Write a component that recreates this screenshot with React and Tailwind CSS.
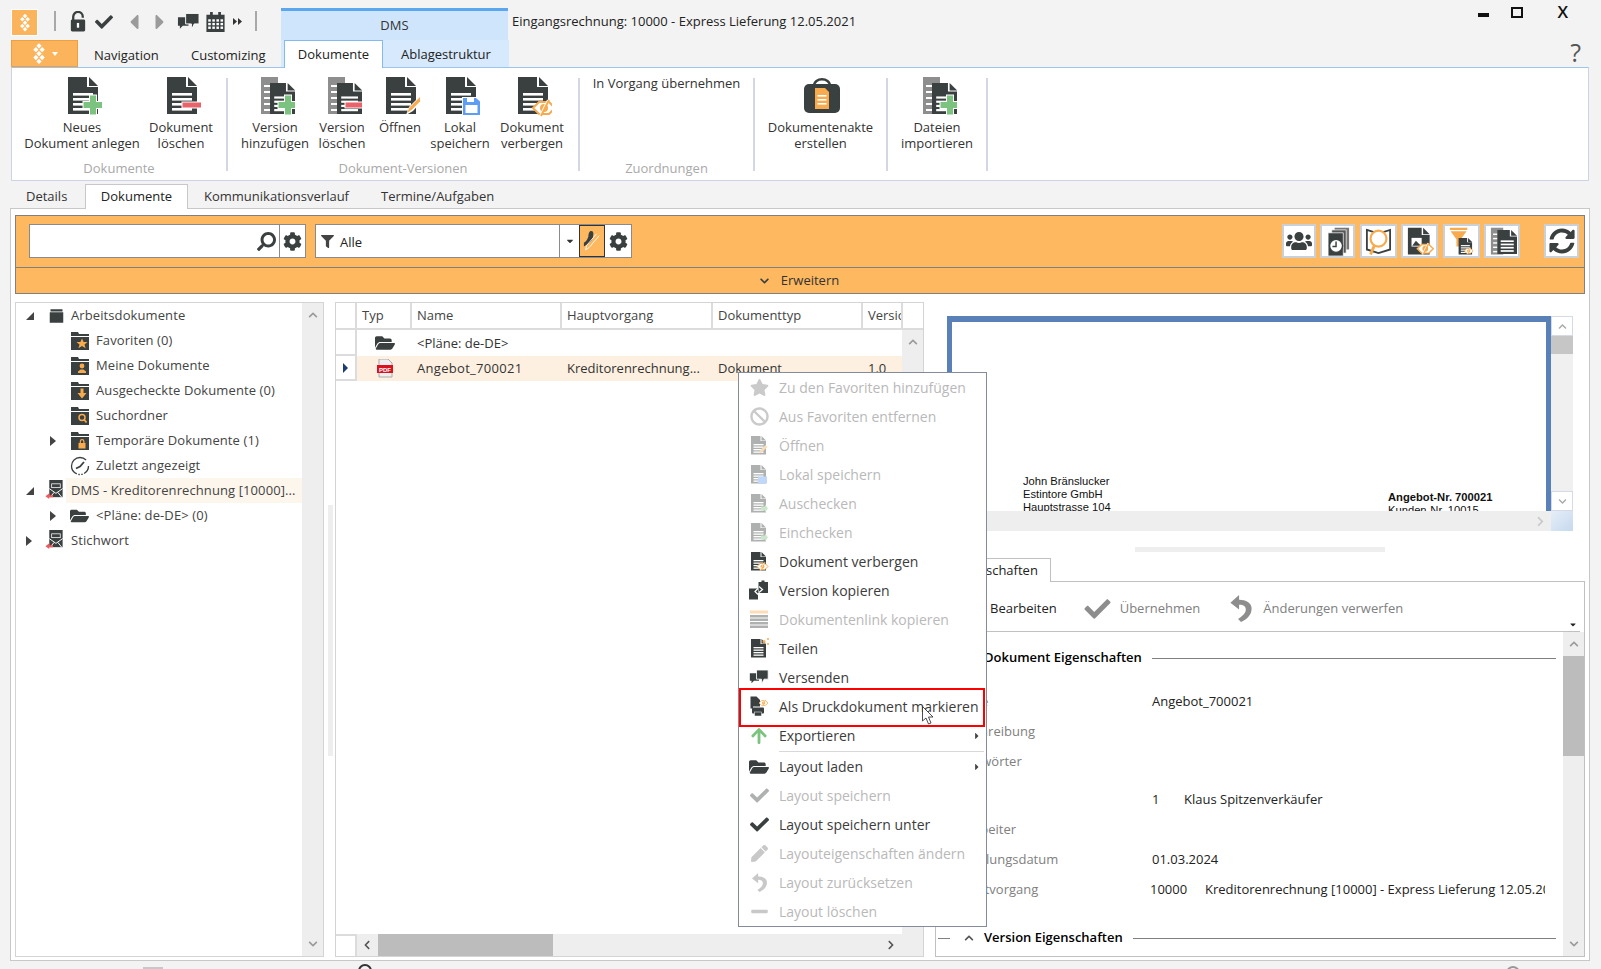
import { FaCheck, FaCog, FaSearch, FaFilter, FaStar, FaFolderOpen, FaUsers, FaSyncAlt, FaCaretLeft, FaCaretRight, FaCaretDown, FaPen, FaArrowUp, FaChevronDown, FaChevronUp, FaChevronLeft, FaChevronRight, FaBan, FaMinus } from "react-icons/fa";

const DARK = "#3a3f3f";

// basic document shape, 30x37 at the origin
function Page({ x = 0, y = 0, s = 1, fill = DARK, lines = true }) {
  return (
    <g transform={`translate(${x} ${y}) scale(${s})`}>
      <path d="M0 0H19V10H30V37H0Z" fill={fill} />
      <path d="M21 0L30 9H21Z" fill={fill} />
      {lines && [16, 21, 26, 31].map((l) => <rect key={l} x="5" y={l} width="20" height="2.6" fill="#fff" />)}
    </g>
  );
}

function Plus({ x = 25, y = 28 }) {
  return (
    <g transform={`translate(${x} ${y})`}>
      <path d="M-4-10.5H4V-4H10.5V4H4V10.5H-4V4H-10.5V-4H-4Z" fill="#fff" />
      <path d="M-3-9.5H3V-3H9.5V3H3V9.5H-3V3H-9.5V-3H-3Z" fill="#7cc37f" />
    </g>
  );
}

function Minus({ x = 25, y = 28 }) {
  return (
    <g transform={`translate(${x} ${y})`}>
      <rect x="-10.5" y="-3.5" width="21" height="7" fill="#fff" />
      <rect x="-9.5" y="-2.5" width="19" height="5" fill="#e8636a" />
    </g>
  );
}

function Eye({ x = 26, y = 29, s = 1 }) {
  return (
    <g transform={`translate(${x} ${y}) scale(${s})`} fill="none" stroke="#f7ab4e" strokeWidth="2">
      <path d="M-11 0L-5-6H5L11 0L5 6H-5Z" fill="#fff" />
      <circle cx="0" cy="0" r="3" fill="#f7ab4e" />
      <path d="M4-8L-4 8" stroke="#fff" strokeWidth="2" />
      <path d="M5-8L-3 8" />
    </g>
  );
}

function Back() {
  return (
    <g>
      <path d="M0 0H17V37H0Z" fill="#8e8e8e" />
      {[8, 14, 20, 26, 32].map((l) => <rect key={l} x="3" y={l} width="6" height="2" fill="#fff" />)}
    </g>
  );
}

function RibbonIcon({ type }) {
  return (
    <svg viewBox="-6 0 40 40" className="w-[40px] h-[40px] shrink-0">
      {type === "new" && <><Page /><Plus /></>}
      {type === "del" && <><Page /><Minus /></>}
      {type === "vadd" && <><Back /><Page x={9} y={6} s={0.84} /><Plus x={27} y={28} /></>}
      {type === "vdel" && <><Back /><Page x={9} y={6} s={0.84} /><Minus x={27} y={28} /></>}
      {type === "open" && (
        <>
          <Page />
          <path d="M20 38L23 30L35 18L38 22L27 34Z" fill="#fff" />
          <path d="M21 36L23.5 30.5L34.5 19.5L36.5 22L26 32.5Z" fill="#f7ab4e" />
        </>
      )}
      {type === "save" && (
        <>
          <Page />
          <path d="M16 20H31L35 24V39H16Z" fill="#fff" />
          <path d="M17 21H30L34 24.5V38H17Z" fill="#5e9df6" />
          <rect x="19.5" y="28" width="12" height="8" fill="#fff" />
          <rect x="21" y="21" width="7" height="4" fill="#fff" />
        </>
      )}
      {type === "hide" && <><Page /><Eye x={26} y={31} /></>}
      {type === "bag" && (
        <>
          <path d="M6 10C6 1 22 1 22 10" fill="none" stroke={DARK} strokeWidth="2.5" transform="translate(1 -1)" />
          <rect x="-3" y="7" width="36" height="29" rx="5" fill={DARK} />
          <path d="M8 11H18L22 15V32H8Z" fill="#f7ab4e" />
          {[18, 22, 26].map((l) => <rect key={l} x="10.5" y={l} width="9" height="1.6" fill="#fff" />)}
        </>
      )}
      {type === "import" && <><Back /><Page x={9} y={6} s={0.84} /><Plus x={27} y={28} /></>}
    </svg>
  );
}

function RibbonButton({ w, type, lines }) {
  return (
    <div className={`flex flex-col items-center ${w}`}>
      <RibbonIcon type={type} />
      <div className="mt-[2px] text-center leading-[16px] text-[#333] whitespace-nowrap">
        {lines.map((l) => <div key={l}>{l}</div>)}
      </div>
    </div>
  );
}

function Group({ w, label, children }) {
  return (
    <div className={`${w} h-full flex flex-col`}>
      <div className="flex h-[84px] items-start pt-[9px]">{children}</div>
      <div className="mt-[8px] text-center leading-[16px] text-[#a9a9a9]">{label}</div>
    </div>
  );
}

const Sep = () => <div className="w-[2px] h-[93px] mt-[10px] bg-[#d4d6e4] shrink-0" />;

function Diamonds({ className }) {
  const pts = [[9, 3], [5, 8], [13, 8], [9, 13], [5, 18], [13, 18], [9, 23]];
  return (
    <svg viewBox="0 0 18 27" className={className}>
      {pts.map(([x, y]) => <rect key={`${x}-${y}`} x={x - 2.4} y={y - 2.4} width="4.8" height="4.8" fill="#fff" transform={`rotate(45 ${x} ${y})`} />)}
    </svg>
  );
}

function Lock() {
  return (
    <svg viewBox="0 0 16 22" className="w-[16px] h-[21px]">
      <path d="M3 10V6a5 5 0 0 1 10 0V7" fill="none" stroke={DARK} strokeWidth="2.4" />
      <rect x="0.5" y="9" width="15" height="12.5" rx="1.5" fill={DARK} />
      <rect x="6.8" y="12.5" width="2.4" height="5" fill="#fff" />
    </svg>
  );
}

function Calendar() {
  return (
    <svg viewBox="0 0 20 22" className="w-[19px] h-[20px] -ml-[3px]">
      <path d="M0 3H20V22H0Z" fill={DARK} />
      <rect x="4" y="0" width="3" height="5" fill={DARK} />
      <rect x="13" y="0" width="3" height="5" fill={DARK} />
      {[8, 12, 16].map((y) => [2, 6.5, 11, 15.5].map((x) => <rect key={`${x}-${y}`} x={x} y={y} width="2.8" height="2.6" fill="#fff" />))}
    </svg>
  );
}

function Chat({ className }) {
  return (
    <svg viewBox="0 0 24 20" className={className}>
      <path d="M1 5H12V14H6L3 17V14H1Z" fill={DARK} />
      <path d="M9 1H23V12H18L15 18V12H9Z" fill={DARK} stroke="#fff" strokeWidth="1" />
    </svg>
  );
}

function UndoHook({ className, color }) {
  return (
    <svg viewBox="0 0 22 28" className={className}>
      <path d="M9 0L0 8L9 15V10C14 10 16 12 16 15C16 19 12 22 8 25L11 28C18 25 22 20 22 14C22 8 16 5 9 5Z" fill={color} />
    </svg>
  );
}

function FolderIcon({ badge }) {
  return (
    <svg viewBox="0 0 20 20" className="w-[20px] h-[20px] shrink-0">
      <path d="M1 1H8L9 3H19V5H1Z" fill={DARK} />
      <rect x="1" y="6" width="18" height="13" fill={DARK} />
      {badge === "star" && <path d="M12 7.5L13.6 11H17.5L14.5 13.4L15.6 17.3L12 15L8.400 17.300L9.500 13.400L6.500 11H10.400Z" fill="#f7ab4e" />}
      {badge === "user" && <><circle cx="12" cy="10" r="2.400" fill="#f7ab4e" /><path d="M8 17V15.500L10.500 13.500H13.500L16 15.500V17Z" fill="#f7ab4e" /></>}
      {badge === "down" && <path d="M10.500 7.500H13.500V12H16.500L12 17.500L7.500 12H10.500Z" fill="#f7ab4e" />}
      {badge === "search" && <><circle cx="12" cy="11.500" r="3" fill="none" stroke="#f7ab4e" strokeWidth="1.500" /><path d="M14 13.500L16.500 16.500" stroke="#f7ab4e" strokeWidth="1.800" /></>}
      {badge === "lock" && <><path d="M10.300 12V10.500a1.800 1.800 0 0 1 3.600 0V12" fill="none" stroke="#f7ab4e" strokeWidth="1.200" /><rect x="8.500" y="12" width="7" height="5.500" fill="#f7ab4e" /></>}
    </svg>
  );
}

function ClockIcon() {
  return (
    <svg viewBox="0 0 20 20" className="w-[20px] h-[20px] shrink-0">
      <circle cx="10" cy="10" r="8.500" fill="none" stroke={DARK} strokeWidth="1.300" strokeDasharray="9 1.500 1.500 1.500 1.500 1.500 30" />
      <path d="M14 6L10 10.500L6 12.500" fill="none" stroke={DARK} strokeWidth="1.800" />
    </svg>
  );
}

function DbIcon() {
  return (
    <svg viewBox="0 0 20 22" className="w-[20px] h-[21px] shrink-0 -ml-[3px]">
      <path d="M4 0H18V18H4Z" fill={DARK} />
      <rect x="6.500" y="4" width="9" height="4" fill="none" stroke="#fff" strokeWidth="0.800" />
      <path d="M4 9L11 14L18 9M5 18L9 13M17 18L13 13" fill="none" stroke="#fff" strokeWidth="1" />
      <path d="M0 17L4 14V16H8V18H4V20Z" fill="#f1585f" />
    </svg>
  );
}

const Tri = ({ open }) =>
  open ? (
    <svg viewBox="0 0 8 8" className="w-[8px] h-[8px]"><path d="M0 8H8V0Z" fill="#444" /></svg>
  ) : (
    <svg viewBox="0 0 6 10" className="w-[6px] h-[10px]"><path d="M0 0L6 5L0 10Z" fill="#444" /></svg>
  );

function TreeRow({ level, exp, icon, text, active }) {
  return (
    <div className="h-[25px] flex items-center text-[#444] tracking-[0.1px]">
      {level === 0 ? (
        <>
          <div className="w-[31px] pl-[10px] flex items-center">{exp && <Tri open={exp === "open"} />}</div>
          <div className="w-[19px] flex justify-center">{icon}</div>
          <div className={`h-[25px] flex-1 flex items-center pl-[5px] ${active ? "bg-[#fdf6ec]" : ""}`}>{text}</div>
        </>
      ) : (
        <>
          <div className="w-[54px] pl-[34px] flex items-center">{exp && <Tri open={false} />}</div>
          <div className="w-[26px]">{icon}</div>
          <div>{text}</div>
        </>
      )}
    </div>
  );
}

function ScrollBtn({ dir }) {
  return (
    <div className="h-[24px] flex items-center justify-center text-[#9a9a9a]">
      {dir === "up" && <FaChevronUp className="w-[10px] h-[10px]" />}
      {dir === "down" && <FaChevronDown className="w-[10px] h-[10px]" />}
    </div>
  );
}

function MenuIcon({ name }) {
  if (name === "star") return <FaStar className="w-[19px] h-[19px]" color="#7d7d7d" />;
  if (name === "ban") return <FaBan className="w-[19px] h-[19px]" color="#7d7d7d" />;
  if (name === "check") return <FaCheck className="w-[19px] h-[19px]" color={DARK} />;
  if (name === "pen") return <FaPen className="w-[17px] h-[17px]" color="#777" />;
  if (name === "undo") return <UndoHook className="w-[15px] h-[19px]" color="#777" />;
  if (name === "minus") return <FaMinus className="w-[19px] h-[19px]" color="#777" />;
  if (name === "send") return <Chat className="w-[20px] h-[17px]" />;
  if (name === "folder") return <FaFolderOpen className="w-[20px] h-[20px]" color={DARK} />;
  if (name === "up") return <FaArrowUp className="w-[18px] h-[18px]" color="#7cc37f" />;
  return (
    <svg viewBox="0 0 40 40" className="w-[20px] h-[21px]">
      {name === "table" && (
        <>
          <rect x="2" y="2" width="36" height="6" fill="#f7ab4e" />
          {[11, 18, 25, 32].map((y) => <rect key={y} x="2" y={y} width="36" height="5" fill={DARK} />)}
        </>
      )}
      {name === "copy" && (
        <>
          <path d="M0 16H18V38H0Z" fill={DARK} />
          <path d="M19 3H25V0H31V3H38V25H19Z" fill={DARK} />
          <path d="M20 12L27 18L20 24M18 28L12 22L18 16" stroke="#fff" strokeWidth="2.500" fill="none" />
        </>
      )}
      {name === "print" && (
        <>
          <path d="M3 0H15L22 7V24H3Z" fill={DARK} />
          <rect x="8" y="20" width="20" height="7" fill="#fff" />
          <rect x="6" y="22" width="24" height="12" rx="2" fill={DARK} />
          <rect x="11" y="31" width="14" height="8" fill={DARK} stroke="#fff" />
          <Eye x={29} y={13} s={0.8} />
        </>
      )}
      {name !== "table" && name !== "copy" && name !== "print" && <Page x={4} y={1} fill={DARK} />}
      {name === "open" && <path d="M20 36L23 29L33 19L37 23L26 33Z" fill="#f7ab4e" />}
      {name === "save" && <rect x="18" y="24" width="18" height="14" fill="#5e9df6" />}
      {name === "hide" && <Eye x={27} y={30} />}
      {name === "co" && <path d="M24 26H32V22L38 30L32 38V34H24Z" fill="#7cc37f" />}
      {name === "share" && <><circle cx="30" cy="6" r="3" fill="#f7ab4e" /><circle cx="38" cy="1" r="2" fill="#f7ab4e" /><circle cx="38" cy="11" r="2" fill="#f7ab4e" /></>}
    </svg>
  );
}

const MENU = [
  { t: "Zu den Favoriten hinzufügen", i: "star", d: true },
  { t: "Aus Favoriten entfernen", i: "ban", d: true },
  { t: "Öffnen", i: "open", d: true },
  { t: "Lokal speichern", i: "save", d: true },
  { t: "Auschecken", i: "co", d: true },
  { t: "Einchecken", i: "co", d: true },
  { t: "Dokument verbergen", i: "hide" },
  { t: "Version kopieren", i: "copy" },
  { t: "Dokumentenlink kopieren", i: "table", d: true },
  { t: "Teilen", i: "share" },
  { t: "Versenden", i: "send" },
  { t: "Als Druckdokument markieren", i: "print", mark: true },
  { t: "Exportieren", i: "up", arrow: true, sep: true },
  { t: "Layout laden", i: "folder", arrow: true },
  { t: "Layout speichern", i: "check", d: true },
  { t: "Layout speichern unter", i: "check" },
  { t: "Layouteigenschaften ändern", i: "pen", d: true },
  { t: "Layout zurücksetzen", i: "undo", d: true },
  { t: "Layout löschen", i: "minus", d: true },
];

function ContextMenu() {
  return (
    <div className="absolute left-[738px] top-[372px] w-[249px] h-[555px] bg-white border border-[#858c99] z-20 text-[14px]">
      {MENU.map((m) => (
        <div key={m.t}>
          <div className={`relative h-[29px] flex items-center ${m.d ? "text-[#b9b9b9]" : "text-[#3c3c3c]"}`}>
            <div className={`w-[40px] flex justify-center ${m.d ? "opacity-40" : ""}`}><MenuIcon name={m.i} /></div>
            <div className="whitespace-nowrap">{m.t}</div>
            {m.arrow && <FaCaretRight className="absolute right-[5px] w-[8px] h-[10px]" color="#444" />}
            {m.mark && (
              <>
                <div className="absolute left-0 right-[1px] top-[-4px] bottom-[-6px] border-2 border-[#ff0000]" />
                <svg viewBox="0 0 12 19" className="absolute left-[183px] top-[14px] w-[12px] h-[19px]">
                  <path d="M0.500 0.500V15L4 12L6.500 18L9 17L6.500 11H11Z" fill="#fff" stroke="#222" strokeWidth="0.800" />
                </svg>
              </>
            )}
          </div>
          {m.sep && <div className="h-[1px] my-[0.5px] ml-[40px] mr-[2px] bg-[#d8d8d8]" />}
        </div>
      ))}
    </div>
  );
}

function ToolBtn({ w, children }) {
  return <div className={`${w} h-[34px] bg-white border-2 border-[#c9d0d8] flex items-center justify-center`}>{children}</div>;
}

function ToolDoc({ children, viewBox = "-3 -1 38 40" }) {
  return <svg viewBox={viewBox} className="w-[29px] h-[29px]">{children}</svg>;
}

function GridHead({ w, children }) {
  return <div className={`${w} h-full flex items-center pl-[5px] pt-[1px] border-r-2 border-[#dcdcdc] overflow-hidden whitespace-nowrap text-[#444] shrink-0`}>{children}</div>;
}

const PROPS = [
  { label: "Name", value: <span>Angebot_700021</span>, h: "h-[30px]" },
  { label: "Beschreibung", h: "h-[30px]" },
  { label: "Stichwörter", h: "h-[29px]" },
  { label: "Autor", value: <span className="flex"><span className="w-[32px]">1</span>Klaus Spitzenverkäufer</span>, h: "h-[39px] pt-[9px]" },
  { label: "Bearbeiter", h: "h-[30px]" },
  { label: "Erstellungsdatum", value: <span>01.03.2024</span>, h: "h-[30px]" },
  { label: "Hauptvorgang", value: <span className="flex -ml-[2px] whitespace-nowrap"><span className="w-[55px]">10000</span>Kreditorenrechnung [10000] - Express Lieferung 12.05.2021</span>, h: "h-[30px]" },
];

function SectionHead({ text }) {
  return (
    <div className="flex items-center h-[30px]">
      <div className="w-[12px] h-[1px] ml-[2px] bg-[#808080]" />
      <FaChevronUp className="w-[10px] h-[10px] ml-[14px] mr-[10px]" color="#555" />
      <div className="font-semibold text-black whitespace-nowrap">{text}</div>
      <div className="flex-1 h-[1px] ml-[10px] mr-[7px] bg-[#808080]" />
    </div>
  );
}

export default function App() {
  return (
    <div className="relative w-[1601px] h-[969px] overflow-hidden bg-[#f3f3f3] font-['Open_Sans',sans-serif] text-[13px] text-[#222]">
      {/* title bar */}
      <div className="h-[40px] flex">
        <div className="ml-[11px] mt-[9px] w-[27px] h-[27px] bg-[#fbb45c] border border-white flex items-center justify-center">
          <Diamonds className="w-[12px] h-[18px]" />
        </div>
        <div className="w-[2px] h-[20px] mt-[11px] ml-[16px] bg-[#a8a8a8]" />
        <div className="flex items-center h-[25px] mt-[9px] ml-[14px] gap-[9px]">
          <Lock />
          <FaCheck className="w-[18px] h-[18px]" color={DARK} />
          <FaCaretLeft className="w-[14px] h-[24px] ml-[5px]" color="#9b9b9b" />
          <FaCaretRight className="w-[14px] h-[24px] ml-[3px]" color="#9b9b9b" />
          <Chat className="w-[23px] h-[20px] ml-[1px]" />
          <Calendar />
          <svg viewBox="0 0 9 7" className="w-[9px] h-[7px] -ml-[1px]"><path d="M0 0L4 3.500L0 7ZM5 0L9 3.500L5 7Z" fill="#333" /></svg>
        </div>
        <div className="w-[2px] h-[20px] mt-[11px] ml-[13px] bg-[#a8a8a8]" />
        <div className="w-[227px] h-[32px] mt-[8px] ml-[24px] bg-[#cfe5fc] border-t-[3px] border-[#5aa7ee] flex items-center justify-center text-[#333]">DMS</div>
        <div className="ml-[4px] mt-[12px] h-[18px] leading-[18px] text-[#222] whitespace-nowrap">Eingangsrechnung: 10000 - Express Lieferung 12.05.2021</div>
        <div className="ml-auto flex items-start pr-[33px]">
          <div className="w-[11px] h-[4px] mt-[13px] bg-[#111]" />
          <div className="w-[12px] h-[11px] mt-[7px] ml-[22px] border-2 border-[#111]" />
          <div className="text-[17px] font-semibold leading-none mt-[3px] ml-[34px] text-[#111]">X</div>
        </div>
      </div>

      {/* ribbon tabs */}
      <div className="h-[27px] flex items-stretch relative z-10">
        <div className="ml-[11px] w-[67px] h-[27px] bg-[#fbb45c] border border-[#ee9f3f] flex items-center justify-center gap-[6px]">
          <Diamonds className="w-[14px] h-[22px]" />
          <svg viewBox="0 0 6 4" className="w-[6px] h-[4px]"><path d="M0 0H6L3 4Z" fill="#fff" /></svg>
        </div>
        <div className="ml-[16px] w-[97px] leading-[28px] text-[#222] mt-[1px]">Navigation</div>
        <div className="w-[90px] leading-[28px] text-[#222] mt-[1px] whitespace-nowrap">Customizing</div>
        <div className="w-[228px] flex bg-[#d7e9fc] pl-[3px]">
          <div className="w-[99px] h-[28px] bg-white border border-b-0 border-[#83b9ee] flex items-center justify-center text-[#222]">Dokumente</div>
          <div className="pl-[18px] leading-[28px] text-[#222]">Ablagestruktur</div>
        </div>
        <div className="ml-auto mr-[20px] text-[25px] leading-[25px] text-[#555]">?</div>
      </div>

      {/* ribbon */}
      <div className="ml-[11px] w-[1578px] h-[114px] bg-white border border-[#cdd3e0] border-t-[#9cc4ee] flex">
        <Group w="w-[214px]" label="Dokumente">
          <RibbonButton w="w-[140px]" type="new" lines={["Neues", "Dokument anlegen"]} />
          <RibbonButton w="w-[58px]" type="del" lines={["Dokument", "löschen"]} />
        </Group>
        <Sep />
        <Group w="w-[350px]" label="Dokument-Versionen">
          <div className="w-[16px]" />
          <RibbonButton w="w-[62px]" type="vadd" lines={["Version", "hinzufügen"]} />
          <RibbonButton w="w-[72px]" type="vdel" lines={["Version", "löschen"]} />
          <RibbonButton w="w-[44px]" type="open" lines={["Öffnen"]} />
          <RibbonButton w="w-[76px]" type="save" lines={["Lokal", "speichern"]} />
          <RibbonButton w="w-[68px]" type="hide" lines={["Dokument", "verbergen"]} />
        </Group>
        <Sep />
        <Group w="w-[173px]" label="Zuordnungen">
          <div className="w-full -mt-[2px] text-center leading-[16px] text-[#333]">In Vorgang übernehmen</div>
        </Group>
        <Sep />
        <Group w="w-[131px]" label="">
          <RibbonButton w="w-[131px]" type="bag" lines={["Dokumentenakte", "erstellen"]} />
        </Group>
        <Sep />
        <Group w="w-[98px]" label="">
          <RibbonButton w="w-[98px]" type="import" lines={["Dateien", "importieren"]} />
        </Group>
        <Sep />
      </div>

      {/* page tabs */}
      <div className="h-[27px] flex items-stretch pl-[26px] relative z-10">
        <div className="leading-[30px] w-[59px] text-[#333]">Details</div>
        <div className="w-[103px] h-[25px] mt-[3px] bg-white border border-b-0 border-[#c8c8c8] flex items-center justify-center text-[#222]">Dokumente</div>
        <div className="leading-[30px] ml-[16px] w-[177px] text-[#333]">Kommunikationsverlauf</div>
        <div className="leading-[30px] text-[#333]">Termine/Aufgaben</div>
      </div>

      {/* content */}
      <div className="ml-[10px] w-[1580px] h-[753px] bg-white border border-[#c8c8c8] pl-[4px] pt-[6px]">
        {/* orange toolbar */}
        <div className="w-[1570px] h-[79px] bg-[#fdb860] border border-[#808080]">
          <div className="h-[52px] flex items-center border-b border-[#808080] pl-[13px] pb-[1px]">
            <div className="w-[277px] h-[34px] bg-white border border-[#8a8a8a] flex">
              <div className="flex-1 flex items-center justify-end pr-[3px]">
                <FaSearch className="w-[19px] h-[19px] -scale-x-100" color={DARK} />
              </div>
              <div className="w-[26px] border-l border-[#8a8a8a] flex items-center justify-center"><FaCog className="w-[19px] h-[19px]" color={DARK} /></div>
            </div>
            <div className="ml-[9px] w-[317px] h-[34px] bg-white border border-[#8a8a8a] flex">
              <div className="w-[243px] flex items-center pl-[5px] pt-[3px] text-[#222] gap-[6px]">
                <FaFilter className="w-[13px] h-[13px] -mt-[3px]" color="#444" />Alle
              </div>
              <div className="w-[20px] border-l border-[#8a8a8a] flex items-center justify-center"><FaCaretDown className="w-[10px] h-[10px]" color="#333" /></div>
              <div className="w-[26px] bg-[#fdb860] border border-[#333] flex items-center justify-center">
                <svg viewBox="0 0 20 24" className="w-[18px] h-[22px]">
                  <path d="M9 1C13 1 11 7 11 9C9 13 6 15 1 18V14C4 12 5 10 6 7C6 4 7 1 9 1Z" fill={DARK} />
                  <path d="M18 6L7 19L3 22L4 17L15 4" fill="none" stroke="#fff" strokeWidth="1" />
                </svg>
              </div>
              <div className="flex-1 flex items-center justify-center"><FaCog className="w-[19px] h-[19px]" color={DARK} /></div>
            </div>
            <div className="ml-auto flex gap-[4.500px] pr-[5px]">
              <ToolBtn w="w-[34px]"><FaUsers className="w-[26px] h-[24px]" color={DARK} /></ToolBtn>
              <ToolBtn w="w-[35px]">
                <ToolDoc><path d="M12 0H32V30H12Z" fill="#777" /><path d="M8 3H28V35H8Z" fill="#555" stroke="#fff" /><path d="M3 7H24V39H3Z" fill={DARK} stroke="#fff" /><circle cx="14" cy="25" r="9" fill="#fff" stroke={DARK} strokeWidth="2" /><path d="M14 19V26H9" stroke={DARK} strokeWidth="2" fill="none" /></ToolDoc>
              </ToolBtn>
              <ToolBtn w="w-[37px]">
                <ToolDoc><path d="M0 3L16 8L32 3V30L16 35L0 30Z" fill="none" stroke={DARK} strokeWidth="2.500" /><circle cx="16" cy="15" r="11" fill="#fff" stroke="#f7ab4e" strokeWidth="3" /><path d="M10 25L5 37" stroke="#f7ab4e" strokeWidth="4" /></ToolDoc>
              </ToolBtn>
              <ToolBtn w="w-[37px]">
                <ToolDoc><Page lines={false} /><rect x="5" y="14" width="14" height="12" fill="#fff" /><path d="M6 25L11 18L18 25Z" fill={DARK} /><Eye x={24} y={29} /></ToolDoc>
              </ToolBtn>
              <ToolBtn w="w-[37px]">
                <ToolDoc><path d="M0 0H24V3H0ZM1 5H23L15 16V26H9V16Z" fill="#f7ab4e" /><Page x={12} y={14} s={0.62} /><Eye x={26} y={32} s={0.55} /></ToolDoc>
              </ToolBtn>
              <ToolBtn w="w-[36px]">
                <ToolDoc><Back /><Page x={9} y={3} s={0.9} /></ToolDoc>
              </ToolBtn>
              <div className="w-[15px]" />
              <ToolBtn w="w-[35px]"><FaSyncAlt className="w-[26px] h-[26px]" color={DARK} /></ToolBtn>
            </div>
          </div>
          <div className="h-[25px] flex items-center justify-center gap-[9px] text-[#333] pr-[4px]">
            <FaChevronDown className="w-[15px] h-[10px]" color={DARK} />
            Erweitern
          </div>
        </div>

        {/* main area */}
        <div className="flex mt-[8px] h-[655px]">
          <div className="w-[309px] h-full border border-[#d4d4d4] flex overflow-hidden">
            <div className="flex-1">
              <TreeRow level={0} exp="open" icon={<svg viewBox="0 0 20 20" className="w-[15px] h-[16px]"><path d="M2 1H18V4H2Z" fill={DARK} /><rect x="1" y="5" width="18" height="14" fill={DARK} /></svg>} text="Arbeitsdokumente" />
              <TreeRow level={1} icon={<FolderIcon badge="star" />} text="Favoriten (0)" />
              <TreeRow level={1} icon={<FolderIcon badge="user" />} text="Meine Dokumente" />
              <TreeRow level={1} icon={<FolderIcon badge="down" />} text="Ausgecheckte Dokumente (0)" />
              <TreeRow level={1} icon={<FolderIcon badge="search" />} text="Suchordner" />
              <TreeRow level={1} exp="closed" icon={<FolderIcon badge="lock" />} text="Temporäre Dokumente (1)" />
              <TreeRow level={1} icon={<ClockIcon />} text="Zuletzt angezeigt" />
              <TreeRow level={0} exp="open" icon={<DbIcon />} text="DMS - Kreditorenrechnung [10000]..." active />
              <TreeRow level={1} exp="closed" icon={<FaFolderOpen className="w-[19px] h-[18px]" color={DARK} />} text="<Pläne: de-DE> (0)" />
              <TreeRow level={0} exp="closed" icon={<DbIcon />} text="Stichwort" />
            </div>
            <div className="w-[21px] bg-[#eeeeee] flex flex-col justify-between">
              <ScrollBtn dir="up" />
              <ScrollBtn dir="down" />
            </div>
          </div>
          <div className="w-[5px] h-[251px] mt-[203px] ml-[4px] bg-[#eeeeee]" />
          <div className="w-[589px] h-full ml-[2px] border border-[#d4d4d4] flex flex-col">
            <div className="h-[27px] flex border-b-2 border-[#dcdcdc] shrink-0">
              <GridHead w="w-[21px]" />
              <GridHead w="w-[55px]">Typ</GridHead>
              <GridHead w="w-[150px]">Name</GridHead>
              <GridHead w="w-[151px]">Hauptvorgang</GridHead>
              <GridHead w="w-[150px]">Dokumenttyp</GridHead>
              <GridHead w="w-[40px]"><span>Version</span></GridHead>
            </div>
            <div className="flex-1 flex min-h-0">
              <div className="flex-1 min-w-0">
                <div className="h-[26px] flex items-center">
                  <div className="w-[21px] h-full border-r-2 border-b-2 border-[#dcdcdc]" />
                  <div className="w-[55px] flex justify-center"><FaFolderOpen className="w-[20px] h-[18px]" color={DARK} /></div>
                  <div className="pl-[5px] pt-[1px] text-[#333]">{"<Pläne: de-DE>"}</div>
                </div>
                <div className="h-[25px] flex items-center">
                  <div className="w-[21px] h-full border-r-2 border-b-2 border-[#dcdcdc] flex items-center justify-center">
                    <svg viewBox="0 0 5 10" className="w-[5px] h-[10px]"><path d="M0 0L5 5L0 10Z" fill="#1b3a78" /></svg>
                  </div>
                  <div className="flex-1 h-full bg-[#fdf0e0] flex items-center text-[#333] whitespace-nowrap">
                    <div className="w-[55px] flex justify-center">
                      <svg viewBox="0 0 16 19" className="w-[16px] h-[19px]">
                        <path d="M2 0H11L15 4V18H2Z" fill="#eee" stroke="#aaa" />
                        <rect x="0" y="6" width="16" height="8" fill="#d9121f" />
                        <text x="8" y="12.500" textAnchor="middle" fontSize="6" fontWeight="700" fill="#fff" fontFamily="Liberation Sans">PDF</text>
                      </svg>
                    </div>
                    <div className="w-[150px] pl-[5px] tracking-[0.3px]">Angebot_700021</div>
                    <div className="w-[151px] pl-[5px]">Kreditorenrechnung...</div>
                    <div className="w-[150px] pl-[5px]">Dokument</div>
                    <div className="pl-[5px]">1.0</div>
                  </div>
                </div>
              </div>
              <div className="w-[21px] bg-[#eeeeee] shrink-0">
                <ScrollBtn dir="up" />
              </div>
            </div>
            <div className="h-[22px] flex shrink-0">
              <div className="w-[21px] border-t-2 border-r-2 border-[#dcdcdc]" />
              <div className="flex-1 flex items-center bg-[#eeeeee]">
                <FaChevronLeft className="w-[10px] h-[10px] mx-[5px] shrink-0" color="#555" />
                <div className="w-[175px] h-full ml-[1px] bg-[#bcbcbc]" />
                <FaChevronRight className="w-[10px] h-[10px] ml-auto mr-[27px]" color="#555" />
              </div>
            </div>
          </div>

          {/* right column */}
          <div className="w-[650px] ml-[11px] h-full flex flex-col">
            <div className="flex ml-[12px] mt-[14px] w-[626px] h-[215px] shrink-0">
              <div className="w-[604px] flex flex-col">
                <div className="h-[195px] border-t-[6px] border-x-[5px] border-[#5a80b8] overflow-hidden bg-white flex font-['Liberation_Sans',sans-serif] text-[11.2px] leading-[13px] text-[#111]">
                  <div className="ml-[71px] mt-[153px] w-[365px]">
                    <div>John Bränslucker</div>
                    <div>Estintore GmbH</div>
                    <div>Hauptstrasse 104</div>
                  </div>
                  <div className="mt-[169px]">
                    <div className="font-bold">Angebot-Nr. 700021</div>
                    <div>Kunden-Nr. 10015</div>
                  </div>
                </div>
                <div className="h-[20px] bg-[#eeeeee] flex items-center justify-end pr-[6px]">
                  <FaChevronRight className="w-[9px] h-[11px]" color="#c9c9c9" />
                </div>
              </div>
              <div className="w-[22px] flex flex-col">
                <div className="h-[195px] bg-[#f0f0f0] flex flex-col">
                  <div className="h-[20px] bg-white border border-[#d5dbe6] flex items-center justify-center"><FaChevronUp className="w-[9px] h-[9px]" color="#a9a9a9" /></div>
                  <div className="h-[18px] bg-[#c6c6c6]" />
                  <div className="mt-auto h-[20px] bg-white border border-[#d5dbe6] flex items-center justify-center"><FaChevronDown className="w-[9px] h-[9px]" color="#a9a9a9" /></div>
                </div>
                <div className="h-[20px] bg-gradient-to-br from-[#e6eef8] to-[#c6d9ee]" />
              </div>
            </div>
            <div className="w-[250px] h-[5px] mt-[16px] ml-[200px] bg-[#eeeeee]" />
            <div className="ml-[5px] mt-[6px] w-[111px] h-[24px] bg-white border border-b-0 border-[#c0c0c0] flex items-center justify-center relative z-10 text-[#222]">Eigenschaften</div>
            <div className="flex-1 -mt-[1px] border border-[#c0c0c0] flex flex-col min-h-0">
              <div className="h-[50px] ml-[1px] mr-[4px] border-b border-[#c0c0c0] flex items-center pl-[53px] pt-[4px] shrink-0">
                <div className="text-[#222] whitespace-nowrap">Bearbeiten</div>
                <FaCheck className="w-[29px] h-[26px] ml-[26px]" color="#8d8d8d" />
                <div className="ml-[8px] text-[#808080] whitespace-nowrap">Übernehmen</div>
                <UndoHook className="w-[22px] h-[27px] ml-[30px]" color="#8d8d8d" />
                <div className="ml-[11px] text-[#808080] whitespace-nowrap">Änderungen verwerfen</div>
                <FaCaretDown className="ml-auto mr-[2px] mt-[32px] w-[10px] h-[9px]" color="#222" />
              </div>
              <div className="flex-1 flex min-h-0">
                <div className="w-[627px] pt-[11px] overflow-hidden">
                  <SectionHead text="Dokument Eigenschaften" />
                  <div className="h-[13px]" />
                  <div className="w-[609px] overflow-hidden">
                    {PROPS.map((p) => (
                      <div key={p.label} className={`flex items-start ${p.h} text-[#222]`}>
                        <div className="w-[216px] pl-[16px] text-[#808080] shrink-0 leading-[30px]">{p.label}</div>
                        <div className="leading-[30px]">{p.value}</div>
                      </div>
                    ))}
                  </div>
                  <div className="h-[19px]" />
                  <SectionHead text="Version Eigenschaften" />
                </div>
                <div className="w-[21px] bg-[#eeeeee] flex flex-col">
                  <ScrollBtn dir="up" />
                  <div className="h-[100px] bg-[#bcbcbc]" />
                  <div className="mt-auto"><ScrollBtn dir="down" /></div>
                </div>
              </div>
            </div>
          </div>
        </div>
      </div>

      {/* cut off items at the very bottom */}
      <div className="h-[8px] flex items-start overflow-hidden">
        <div className="ml-[143px] mt-[6px] w-[20px] h-[2px] bg-[#c8c8c8]" />
        <div className="ml-[195px] mt-[3px] w-[14px] h-[14px] rounded-full border-2 border-[#333]" />
        <div className="ml-[1134px] mt-[5px] w-[14px] h-[14px] rounded-full border-2 border-[#999]" />
      </div>

      <ContextMenu />
    </div>
  );
}
